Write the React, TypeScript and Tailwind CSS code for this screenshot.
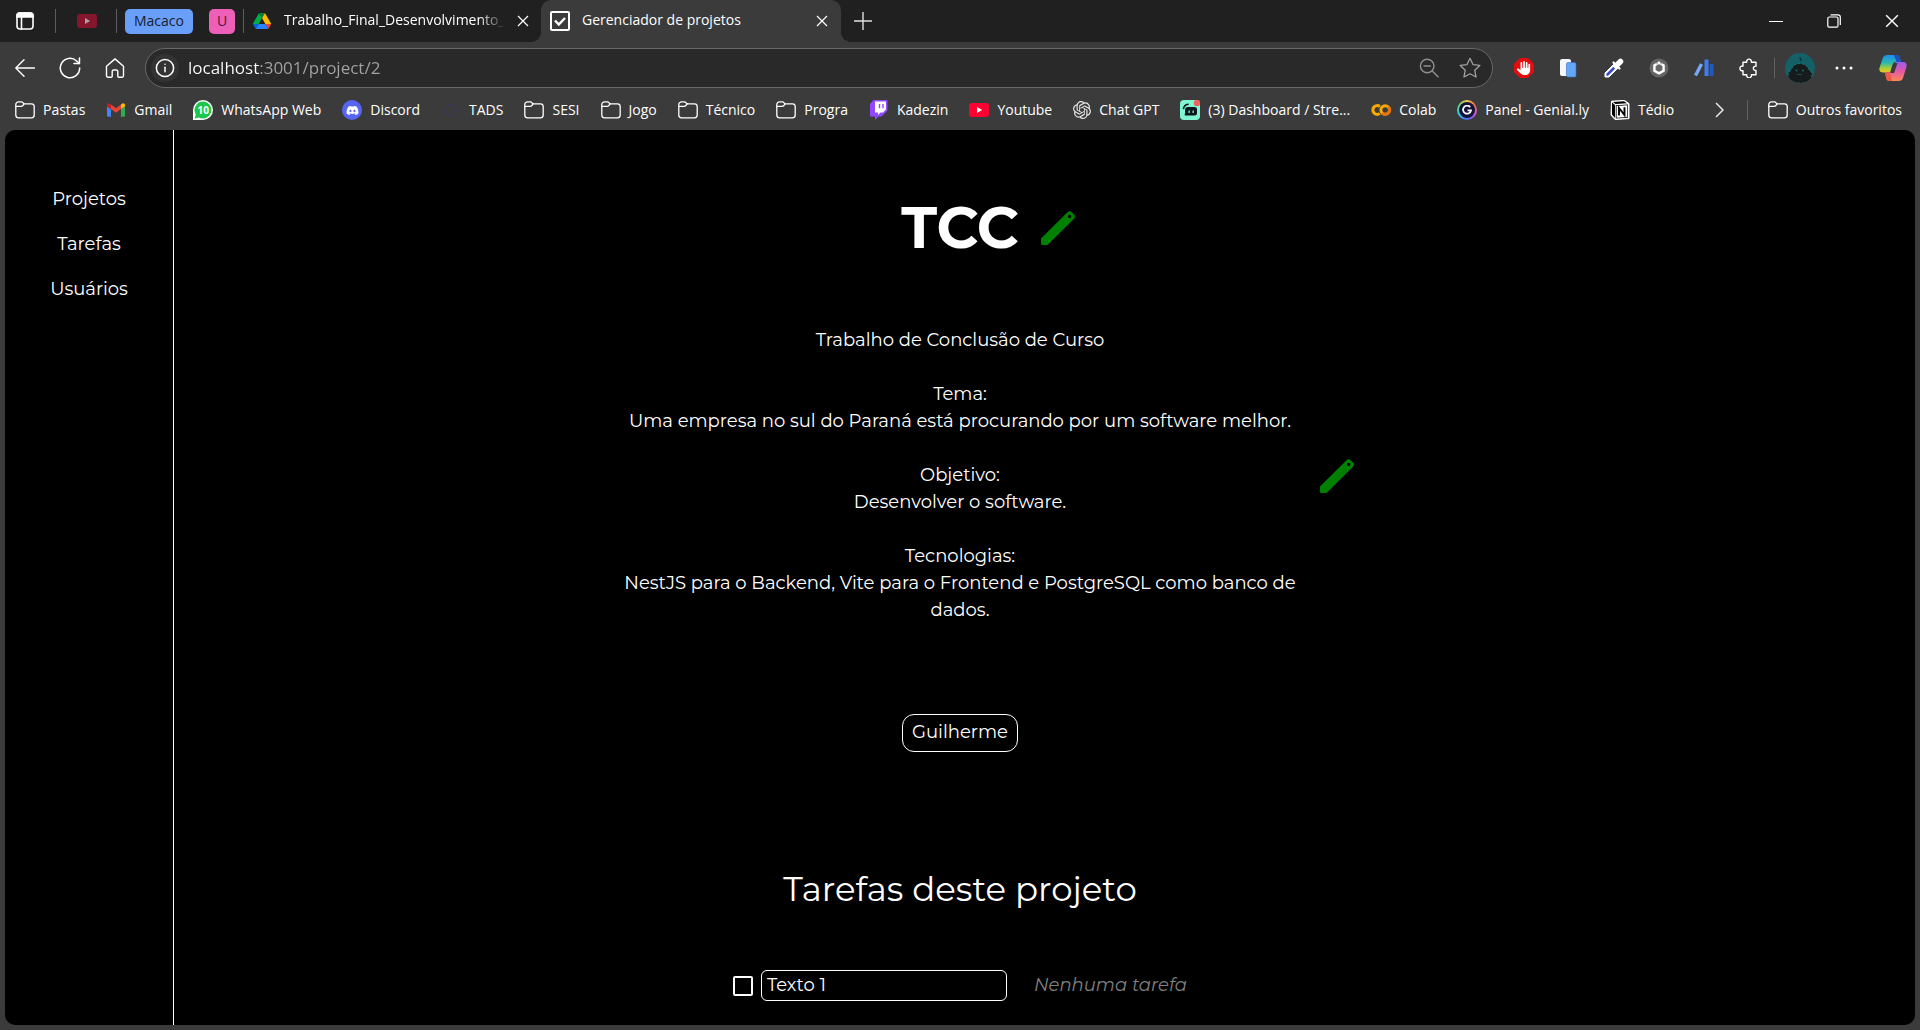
import { useState } from "react";
import type { ReactNode } from "react";
import { SiOpenai } from "react-icons/si";
import { FaDiscord, FaHand } from "react-icons/fa6";

type IconProps = { className?: string };

function Stroke({ children, size = 20, className = "", width = 1.4 }: { children: ReactNode; size?: number; className?: string; width?: number }) {
  return (
    <svg
      width={size}
      height={size}
      viewBox="0 0 20 20"
      fill="none"
      stroke="currentColor"
      strokeWidth={width}
      strokeLinecap="round"
      strokeLinejoin="round"
      className={`shrink-0 ${className}`}
      aria-hidden="true"
    >
      {children}
    </svg>
  );
}

const TabActionsIcon = () => (
  <Stroke width={1.6}>
    <rect x="2" y="2" width="16" height="16" rx="3" />
    <path d="M2 4.5A2.5 2.5 0 0 1 4.500 2h11A2.500 2.500 0 0 1 18 4.500V6H2z" fill="currentColor" />
    <path d="M6.500 6v12" />
  </Stroke>
);

const BackIcon = () => (
  <Stroke>
    <path d="M19.500 10H.8M9 1.800.8 10 9 18.200" />
  </Stroke>
);

const ReloadIcon = () => (
  <Stroke size={22}>
    <path d="M18.800 10A8.800 8.800 0 1 1 16 3.600L18.300 5.800" />
    <path d="M18.600 1v5h-5" />
  </Stroke>
);

const HomeIcon = () => (
  <Stroke>
    <path d="M1.500 8.200 10 .9l8.500 7.300v9.600a1.400 1.400 0 0 1-1.400 1.400h-3.300a1 1 0 0 1-1-1v-4.900a1.300 1.300 0 0 0-1.300-1.300h-3a1.300 1.300 0 0 0-1.300 1.300v4.900a1 1 0 0 1-1 1H2.900a1.400 1.400 0 0 1-1.400-1.400z" />
  </Stroke>
);

const InfoIcon = () => (
  <Stroke width={1.500}>
    <circle cx="10" cy="10" r="8.600" />
    <path d="M10 9.200v4.600" />
    <path d="M10 6.200v.1" width="2" />
  </Stroke>
);

const ZoomOutIcon = () => (
  <Stroke className="text-[#8f8f8f]">
    <circle cx="8.200" cy="8" r="6.800" />
    <path d="M13.200 13 19 18.800M5 8h6.400" />
  </Stroke>
);

const StarIcon = () => (
  <Stroke size={22} className="text-[#a0a0a0]" width={1.200}>
    <path d="m10 1.200 2.700 5.700 6.200.8-4.600 4.300 1.200 6.200L10 15.200l-5.500 3 1.200-6.200L1.100 7.700l6.200-.8z" />
  </Stroke>
);

const PuzzleIcon = () => (
  <Stroke>
    <path d="M4 4.200h3.700a2.400 2.400 0 1 1 4.600 0H17v4a2.200 2.200 0 1 0 0 4.300v4.300h-4.600a2.400 2.400 0 1 1-4.600 0H4v-4.100a2.400 2.400 0 1 1 0-4.600z" />
  </Stroke>
);

const CloseIcon = ({ className }: IconProps) => (
  <svg width="12" height="12" viewBox="0 0 12 12" fill="none" stroke="currentColor" strokeWidth="1.200" className={className} aria-hidden="true">
    <path d="m1 1 10 10M11 1 1 11" />
  </svg>
);

const FolderIcon = () => (
  <Stroke width={1.300}>
    <path d="M.8 4.500A2.700 2.700 0 0 1 3.500 1.800h2.800c.7 0 1.200.3 1.600.8l.9 1.200h7.700a2.700 2.700 0 0 1 2.700 2.700v8.600a2.700 2.700 0 0 1-2.700 2.700h-13A2.700 2.700 0 0 1 .8 15.100z" />
    <path d="M.8 6.400h5.400c.6 0 1-.2 1.400-.6l1.500-2" />
  </Stroke>
);

const YoutubeIcon = ({ dim = false }: { dim?: boolean }) => (
  <svg width="20" height="20" viewBox="0 0 20 20" className="shrink-0" aria-hidden="true">
    <rect x="0" y="3" width="20" height="14" rx="3" fill={dim ? "#85162b" : "#ff0033"} />
    <path d="m8 7 5.200 3L8 13z" fill={dim ? "#a9a0a2" : "#fff"} />
  </svg>
);

const DriveIcon = () => (
  <svg width="18" height="18" viewBox="0 0 87.300 78" className="shrink-0" aria-hidden="true">
    <path d="m6.600 66.850 3.850 6.650c.8 1.400 1.950 2.500 3.300 3.300l13.750-23.800H0c0 1.550.4 3.100 1.200 4.500z" fill="#0066da" />
    <path d="M43.650 25 29.900 1.200c-1.350.8-2.500 1.900-3.300 3.300L1.200 48.500A9 9 0 0 0 0 53h27.500z" fill="#00ac47" />
    <path d="M73.550 76.800c1.350-.8 2.500-1.900 3.300-3.300l1.600-2.750 7.650-13.250c.8-1.400 1.200-2.950 1.200-4.500H59.800l5.850 11.500z" fill="#ea4335" />
    <path d="M43.650 25 57.400 1.200C56.050.4 54.500 0 52.900 0H34.400c-1.600 0-3.150.45-4.500 1.200z" fill="#00832d" />
    <path d="M59.800 53H27.500L13.750 76.800c1.350.8 2.900 1.200 4.500 1.200h50.800c1.600 0 3.150-.45 4.500-1.200z" fill="#2684fc" />
    <path d="m73.400 26.500-12.700-22c-.8-1.400-1.950-2.500-3.300-3.300L43.650 25 59.800 53h27.450c0-1.550-.4-3.100-1.200-4.500z" fill="#ffba00" />
  </svg>
);

const GmailIcon = () => (
  <svg width="20" height="20" viewBox="0 0 20 20" className="shrink-0" aria-hidden="true">
    <path d="M1 6.500V15.500A1.300 1.300 0 0 0 2.300 16.800H5V9z" fill="#4285f4" />
    <path d="M19 6.500V15.500A1.300 1.300 0 0 1 17.700 16.800H15V9z" fill="#34a853" />
    <path d="M5 9V4.400l5 3.800 5-3.800V9l-5 3.800z" fill="#ea4335" />
    <path d="M1 5.300C1 3.400 3.100 2.800 4.400 3.900L5 4.400V9L1 6.500z" fill="#c5221f" />
    <path d="M19 5.300c0-1.900-2.100-2.500-3.400-1.400l-.6.500V9l4-2.500z" fill="#fbbc04" />
  </svg>
);

const WhatsAppIcon = () => (
  <span className="relative flex size-5 shrink-0 items-center justify-center">
    <svg width="20" height="20" viewBox="0 0 20 20" className="absolute inset-0" aria-hidden="true">
      <path d="M10 0a10 10 0 0 1 0 20H0V10A10 10 0 0 1 10 0z" fill="#fff" />
      <path d="M10 1.600a8.400 8.400 0 1 1-4 15.800l-4.400 1.200 1.200-4.200A8.400 8.400 0 0 1 10 1.600z" fill="#1cc64b" />
    </svg>
    <span className="relative text-[10px] leading-none font-bold text-white">10</span>
  </span>
);

const DiscordIcon = () => (
  <span className="flex size-5 shrink-0 items-center justify-center rounded-full bg-[#5865f2] text-white">
    <FaDiscord size={13} />
  </span>
);

const TadsIcon = () => (
  <svg width="20" height="20" viewBox="0 0 20 20" fill="none" stroke="#3d3560" strokeWidth="2" strokeDasharray="2 2" className="shrink-0" aria-hidden="true">
    <circle cx="10" cy="10" r="5" />
  </svg>
);

const TwitchIcon = () => (
  <svg width="20" height="20" viewBox="0 0 20 20" className="shrink-0" aria-hidden="true">
    <path d="M4.500 0H18.500V10.500L12.500 16.500H9.500L6 20V16.500H1V4z" fill="#9146ff" />
    <path d="M6 1.500H17V9.500L14 12.500H11.500L9 15V12.500H6z" fill="#fff" />
    <path d="M9.800 4h1.400v4.200H9.800zM13.300 4h1.400v4.200h-1.400z" fill="#9146ff" />
  </svg>
);

const StreamIcon = () => (
  <svg width="20" height="20" viewBox="0 0 20 20" className="shrink-0" aria-hidden="true">
    <rect width="20" height="20" rx="4" fill="#80f5d2" />
    <path d="M3.500 8.500A5.500 5.500 0 0 1 8 4.300" fill="none" stroke="#09161d" strokeWidth="1.600" strokeLinecap="round" />
    <path d="M8 7h6.500A2.500 2.500 0 0 1 17 9.500V13a2.500 2.500 0 0 1-2.500 2.500H5.500a1 1 0 0 1-.5-1.800V10A3 3 0 0 1 8 7z" fill="#09161d" />
    <path d="M8.500 10.500h1.300v2.500H8.500zM12.500 10.500h1.300v2.500h-1.300z" fill="#80f5d2" />
    <circle cx="17" cy="3" r="3.200" fill="#f1605a" />
  </svg>
);

const ColabIcon = () => (
  <svg width="20" height="20" viewBox="0 0 20 20" fill="none" strokeWidth="3" className="shrink-0" aria-hidden="true">
    <path d="M8.800 6.400a4.400 4.400 0 1 0 0 7.200" stroke="#f9ab00" />
    <circle cx="14.200" cy="10" r="4.300" stroke="#f9ab00" />
    <path d="M11.200 13.100a4.300 4.300 0 0 0 6-6.200" stroke="#e8710a" />
  </svg>
);

const GeniallyIcon = () => (
  <span className="flex size-5 shrink-0 items-center justify-center rounded-full bg-[conic-gradient(#f7c948,#f06a4a,#c65be0,#4a6cf5,#38c6e8,#5ed67c,#f7c948)]">
    <span className="flex size-4 items-center justify-center rounded-full bg-[#12123a] text-white">
      <svg width="10" height="10" viewBox="0 0 10 10" fill="none" stroke="currentColor" strokeWidth="1.800" aria-hidden="true">
        <path d="M8.200 2.200A4 4 0 1 0 9 5.400H5.500" />
      </svg>
    </span>
  </span>
);

const NotionIcon = () => (
  <svg width="20" height="20" viewBox="0 0 20 20" className="shrink-0" aria-hidden="true">
    <path d="M1.500 1.200 14.500.4 19 3.600V18.600L5 19.600 1 15z" fill="#fff" stroke="#fff" strokeWidth="1" strokeLinejoin="round" />
    <path d="M2 2.500 5 5V18L2 14.500z" fill="#000" />
    <path d="M3 1.900 14 1.200 17 3.300 5.500 4z" fill="#000" />
    <path d="M5.800 5.200 18 4.400V17.700L5.800 18.500z" fill="#000" />
    <path d="M6.600 6 17.300 5.300V17L6.600 17.700z" fill="#fff" />
    <path d="M9 15.500V8l5.500 7V7.300" fill="none" stroke="#000" strokeWidth="1.900" />
  </svg>
);

const BlockerIcon = () => (
  <span className="flex size-5 shrink-0 items-center justify-center bg-[#e40d0d] text-white [clip-path:polygon(30%_0,70%_0,100%_30%,100%_70%,70%_100%,30%_100%,0_70%,0_30%)]">
    <FaHand size={14} />
  </span>
);

const PagesIcon = () => (
  <svg width="20" height="20" viewBox="0 0 20 20" aria-hidden="true">
    <rect x="1" y="1" width="11" height="17" rx="2" fill="#f4f7fb" />
    <rect x="7.500" y="4.500" width="9.500" height="14.500" rx="1.500" fill="#64a6f8" stroke="#3b6fc0" strokeWidth=".6" />
  </svg>
);

const DropperIcon = () => (
  <svg width="20" height="20" viewBox="0 0 20 20" aria-hidden="true">
    <path d="M1 19v-4L9.500 6.500 13.500 10.500 5 19z" fill="#fff" stroke="#fff" strokeWidth="1" strokeLinejoin="round" />
    <path d="M3.500 16.500 9.500 10.500" stroke="#3450c8" strokeWidth="2.600" strokeLinecap="round" />
    <path d="M9.500 4.500 15.500 10.500" stroke="#fff" strokeWidth="2.200" strokeLinecap="round" />
    <path d="M12.500 7.500 16.500 3.500" stroke="#fff" strokeWidth="5.500" strokeLinecap="round" />
  </svg>
);

const HexagonIcon = () => (
  <svg width="20" height="20" viewBox="0 0 20 20" aria-hidden="true">
    <circle cx="10" cy="10" r="9.500" fill="#666" />
    <path d="M10 4.700 14.600 7.400v5.300L10 15.400l-4.600-2.700V7.400z" fill="none" stroke="#fff" strokeWidth="2.400" />
    <path d="M8 3v3.500M12 3v3.500" stroke="#666" strokeWidth=".8" />
  </svg>
);

const BarsIcon = () => (
  <svg width="20" height="20" viewBox="0 0 20 20" aria-hidden="true">
    <path d="M1.500 17.500 7.500 6" stroke="#79a8f8" strokeWidth="3.400" />
    <rect x="10.500" y="1.500" width="4" height="16.500" rx=".5" fill="#3f7df0" />
    <rect x="15.500" y="6" width="4" height="12" rx=".5" fill="#2359bd" />
  </svg>
);

const AvatarIcon = () => (
  <svg width="30" height="30" viewBox="0 0 30 30" className="rounded-full" aria-hidden="true">
    <rect width="30" height="30" fill="#136067" />
    <path d="M3 30C2 27 4 24 3 20c2-1 3-4 6-7.500 3.500-2.500 8.500-2.500 12 0C24 16 25 19 27 20c-1 4 1 7 0 10z" fill="#161b1c" stroke="#1a8d94" strokeWidth=".7" strokeDasharray="2 2" />
    <path d="M15 4.500 16 7.500" fill="none" stroke="#0f272a" strokeWidth="1.500" />
    <circle cx="11.500" cy="17.500" r="1" fill="#166a70" />
    <circle cx="18" cy="17.500" r="1" fill="#166a70" />
    <path d="M12 21.500h5" stroke="#124e53" strokeWidth="1" />
  </svg>
);

const CopilotIcon = () => (
  <svg width="28" height="28" viewBox="0 0 28 28" aria-hidden="true">
    <defs>
      <linearGradient id="cp-a" x1="0" y1="0" x2="0" y2="1">
        <stop offset="0" stopColor="#1f8df0" />
        <stop offset=".45" stopColor="#2ab8b0" />
        <stop offset=".75" stopColor="#a7cf3a" />
        <stop offset="1" stopColor="#f4c51c" />
      </linearGradient>
      <linearGradient id="cp-b" x1="0" y1="0" x2="0" y2="1">
        <stop offset="0" stopColor="#9a5cf2" />
        <stop offset=".5" stopColor="#e658a4" />
        <stop offset="1" stopColor="#fb8b52" />
      </linearGradient>
    </defs>
    <path d="M8.500 1H17.500c2 0 2.800 1 3.300 2.800L22 8H17c-2 0-3 1-3.600 3L11 18.500H4c-3 0-4.300-2-3.400-5L3.800 4C4.500 2 6 1 8.500 1z" fill="url(#cp-a)" />
    <path d="M15 1h2.500c2 0 2.800 1 3.300 2.800L22 8h-4.500z" fill="#1b50c8" />
    <path d="M19.500 27h-9c-2 0-2.800-1-3.300-2.800L6 18.500H11c2 0 3-1 3.600-3L17 8h7c3 0 4.300 2 3.400 5L24.200 23.500C23.500 26 22 27 19.500 27z" fill="url(#cp-b)" />
    <path d="M13 27h-2.500c-2 0-2.800-1-3.300-2.800L6 18.500h5z" fill="#ee5a44" />
    <path d="M16.500 9h2L15 19h-3.500l1-1.500z" fill="#3b3b3b" />
  </svg>
);

const PencilIcon = () => (
  <svg width="34" height="34" viewBox="0 0 34 34" aria-hidden="true">
    <path
      fillRule="evenodd"
      fill="#008000"
      d="M0 27.500 26.500 1.200a3 3 0 0 1 4.200 0l2.300 2.300a3 3 0 0 1 0 4.200L7 33.400a2 2 0 0 1-1.400.6H1.500A1.500 1.500 0 0 1 0 32.500zM28.600 3.700a1.700 1.700 0 1 0 0 3.400 1.700 1.700 0 0 0 0-3.400z"
    />
  </svg>
);

const bookmarks: { label: string; icon: ReactNode }[] = [
  { label: "Pastas", icon: <FolderIcon /> },
  { label: "Gmail", icon: <GmailIcon /> },
  { label: "WhatsApp Web", icon: <WhatsAppIcon /> },
  { label: "Discord", icon: <DiscordIcon /> },
  { label: "TADS", icon: <TadsIcon /> },
  { label: "SESI", icon: <FolderIcon /> },
  { label: "Jogo", icon: <FolderIcon /> },
  { label: "Técnico", icon: <FolderIcon /> },
  { label: "Progra", icon: <FolderIcon /> },
  { label: "Kadezin", icon: <TwitchIcon /> },
  { label: "Youtube", icon: <YoutubeIcon /> },
  { label: "Chat GPT", icon: <SiOpenai size={18} className="shrink-0 text-[#e8e8e8]" /> },
  { label: "(3) Dashboard / Stre...", icon: <StreamIcon /> },
  { label: "Colab", icon: <ColabIcon /> },
  { label: "Panel - Genial.ly", icon: <GeniallyIcon /> },
  { label: "Tédio", icon: <NotionIcon /> },
];

const extensions: { label: string; icon: ReactNode }[] = [
  { label: "Bloqueador", icon: <BlockerIcon /> },
  { label: "Páginas", icon: <PagesIcon /> },
  { label: "Conta-gotas", icon: <DropperIcon /> },
  { label: "Hexágono", icon: <HexagonIcon /> },
  { label: "Estatísticas", icon: <BarsIcon /> },
  { label: "Extensões", icon: <PuzzleIcon /> },
];

function TabStrip() {
  return (
    <div className="flex h-[42px] items-center bg-[#202020]">
      <button aria-label="Menu de guias" className="ml-[15px]">
        <TabActionsIcon />
      </button>
      <span className="ml-5 h-6 w-px bg-[#5c5c5c]" />
      <button aria-label="YouTube" className="ml-[21px]">
        <YoutubeIcon dim />
      </button>
      <span className="ml-[19px] h-6 w-px bg-[#5c5c5c]" />
      <button className="ml-2 h-[25px] w-[68px] rounded-[5px] bg-[#699ff9] text-sm text-[#171e2e]">Macaco</button>
      <button className="ml-4 h-[25px] w-[26px] rounded-[5px] bg-[#ee5fb7] text-sm text-[#421b36]">U</button>
      <span className="ml-2 h-6 w-px bg-[#5c5c5c]" />
      <div className="ml-[9px] flex w-[288px] items-center">
        <DriveIcon />
        <span className="ml-[13px] w-[221px] pb-0.5 whitespace-nowrap [mask-image:linear-gradient(to_right,black_88%,transparent)]">
          Trabalho_Final_Desenvolvimento_
        </span>
        <button aria-label="Fechar guia" className="ml-3">
          <CloseIcon />
        </button>
      </div>
      <div className="relative flex h-full w-[300px] items-center rounded-t-[10px] bg-[#3b3b3b] pr-[13px] pl-[9px]">
        <span className="absolute bottom-0 -left-2.5 size-2.5 bg-[radial-gradient(circle_at_0_0,#202020_10px,#3b3b3b_10px)]" />
        <span className="absolute -right-2.5 bottom-0 size-2.5 bg-[radial-gradient(circle_at_100%_0,#202020_10px,#3b3b3b_10px)]" />
        <svg width="20" height="20" viewBox="0 0 20 20" fill="none" stroke="#fff" strokeWidth="2" aria-hidden="true">
          <rect x="1" y="1" width="18" height="18" rx="1" />
          <path d="m5 9.500 3.800 4L15 7" strokeWidth="2.400" />
        </svg>
        <span className="ml-3 grow pb-0.5">Gerenciador de projetos</span>
        <button aria-label="Fechar guia">
          <CloseIcon />
        </button>
      </div>
      <button aria-label="Nova guia" className="ml-[13px]">
        <svg width="18" height="18" viewBox="0 0 18 18" stroke="#e0e0e0" strokeWidth="1.400" aria-hidden="true">
          <path d="M9 0v18M0 9h18" />
        </svg>
      </button>
      <div className="ml-auto flex items-center gap-11 pr-[21px]">
        <button aria-label="Minimizar">
          <svg width="14" height="14" viewBox="0 0 14 14" stroke="#fff" aria-hidden="true">
            <path d="M0 7.500h14" />
          </svg>
        </button>
        <button aria-label="Restaurar">
          <svg width="14" height="14" viewBox="0 0 14 14" fill="none" stroke="#fff" strokeWidth="1.200" aria-hidden="true">
            <rect x=".8" y="3" width="10.200" height="10.200" rx="1.500" />
            <path d="M3.500.8H11a2.300 2.300 0 0 1 2.300 2.300V11" />
          </svg>
        </button>
        <button aria-label="Fechar">
          <CloseIcon className="size-3.5" />
        </button>
      </div>
    </div>
  );
}

function Toolbar() {
  const [url, setUrl] = useState("localhost:3001/project/2");
  return (
    <div className="flex items-center pt-1.5">
      <div className="flex w-[145px] shrink-0 items-center gap-6 pl-[15px]">
        <button aria-label="Voltar">
          <BackIcon />
        </button>
        <button aria-label="Atualizar">
          <ReloadIcon />
        </button>
        <button aria-label="Página inicial">
          <HomeIcon />
        </button>
      </div>
      <div className="flex h-10 grow items-center rounded-full border border-[#686868] bg-[#292929] pr-[11px] pl-[5px]">
        <button aria-label="Informações do site" className="flex size-7 items-center justify-center rounded-full bg-[#333333]">
          <InfoIcon />
        </button>
        <input
          aria-label="Barra de endereços"
          value={url}
          onChange={(event) => setUrl(event.target.value)}
          spellCheck={false}
          className="ml-[9px] min-w-0 grow bg-[linear-gradient(to_right,#ffffff_71px,#a3a3a3_71px)] bg-clip-text text-[17px] leading-6 text-transparent outline-none"
        />
        <button aria-label="Zoom">
          <ZoomOutIcon />
        </button>
        <button aria-label="Adicionar aos favoritos" className="ml-5">
          <StarIcon />
        </button>
      </div>
      <div className="ml-[21px] flex items-center gap-[25px]">
        {extensions.map((extension) => (
          <button key={extension.label} aria-label={extension.label}>
            {extension.icon}
          </button>
        ))}
      </div>
      <span className="ml-[15px] h-5 w-px bg-[#606060]" />
      <button aria-label="Perfil" className="ml-2.5">
        <AvatarIcon />
      </button>
      <button aria-label="Mais opções" className="ml-5">
        <svg width="18" height="18" viewBox="0 0 18 18" fill="#fff" aria-hidden="true">
          <circle cx="2" cy="9" r="1.500" />
          <circle cx="9" cy="9" r="1.500" />
          <circle cx="16" cy="9" r="1.500" />
        </svg>
      </button>
      <button aria-label="Copilot" className="mr-[13px] ml-[26px]">
        <CopilotIcon />
      </button>
    </div>
  );
}

function BookmarkBar() {
  return (
    <nav aria-label="Favoritos" className="flex h-[42px] items-center pt-0.5 pr-[18px] pl-[15px]">
      <ul className="flex items-center gap-[21px]">
        {bookmarks.map((bookmark) => (
          <li key={bookmark.label}>
            <a href="#" className="flex items-center gap-2 whitespace-nowrap">
              {bookmark.icon}
              {bookmark.label}
            </a>
          </li>
        ))}
      </ul>
      <button aria-label="Mais favoritos" className="ml-auto">
        <svg width="9" height="16" viewBox="0 0 9 16" fill="none" stroke="#e8e8e8" strokeWidth="1.500" aria-hidden="true">
          <path d="m1 1 7 7-7 7" />
        </svg>
      </button>
      <span className="ml-[23px] h-5 w-px bg-[#606060]" />
      <a href="#" className="ml-5 flex items-center gap-2 whitespace-nowrap">
        <FolderIcon />
        Outros favoritos
      </a>
    </nav>
  );
}

function ProjectPage() {
  const [task, setTask] = useState("Texto 1");
  const [done, setDone] = useState(false);
  return (
    <div className="mx-[5px] mb-[5px] grid grow grid-cols-[169px_1fr_169px] overflow-hidden rounded-[10px] bg-black font-['Montserrat','Inter',sans-serif] text-lg leading-[27px] text-white">
      <nav aria-label="Principal" className="flex flex-col items-center gap-[18px] border-r border-white pt-14">
        <a href="#">Projetos</a>
        <a href="#">Tarefas</a>
        <a href="#">Usuários</a>
      </nav>
      <main className="flex flex-col items-center">
        <div className="mt-[62px] grid grid-cols-[1fr_auto_1fr] items-center gap-x-[22px]">
          <h1 className="col-start-2 text-[58px] leading-[72px] font-bold">TCC</h1>
          <button aria-label="Editar nome">
            <PencilIcon />
          </button>
        </div>
        <div className="mt-[63px] grid grid-cols-[1fr_auto_1fr] items-center gap-x-5">
          <div className="col-start-2 w-[680px] text-center">
            <p>Trabalho de Conclusão de Curso</p>
            <p className="mt-[27px]">
              Tema:
              <br />
              Uma empresa no sul do Paraná está procurando por um software melhor.
            </p>
            <p className="mt-[27px]">
              Objetivo:
              <br />
              Desenvolver o software.
            </p>
            <p className="mt-[27px]">
              Tecnologias:
              <br />
              NestJS para o Backend, Vite para o Frontend e PostgreSQL como banco de dados.
            </p>
          </div>
          <button aria-label="Editar descrição">
            <PencilIcon />
          </button>
        </div>
        <button className="mt-[90px] h-[38px] rounded-xl border border-white px-[9px] pb-0.5">Guilherme</button>
        <h2 className="mt-28 text-[34px] leading-[50px]">Tarefas deste projeto</h2>
        <form className="mt-[56px] flex items-center">
          <input
            type="checkbox"
            aria-label="Tarefa concluída"
            checked={done}
            onChange={(event) => setDone(event.target.checked)}
            className="size-5 appearance-none rounded-[2px] border-2 border-white checked:bg-white"
          />
          <input
            type="text"
            aria-label="Texto da tarefa"
            value={task}
            onChange={(event) => setTask(event.target.value)}
            className="ml-2 h-[31px] w-[246px] rounded-md border border-white bg-transparent px-[5px] pb-0.5 outline-none"
          />
          <em className="ml-[27px] text-[#808080]">Nenhuma tarefa</em>
        </form>
      </main>
    </div>
  );
}

export default function App() {
  return (
    <div className="flex min-h-screen flex-col overflow-hidden bg-[#3b3b3b] font-['Open_Sans','Noto_Sans',sans-serif] text-sm text-white">
      <TabStrip />
      <Toolbar />
      <BookmarkBar />
      <ProjectPage />
    </div>
  );
}
